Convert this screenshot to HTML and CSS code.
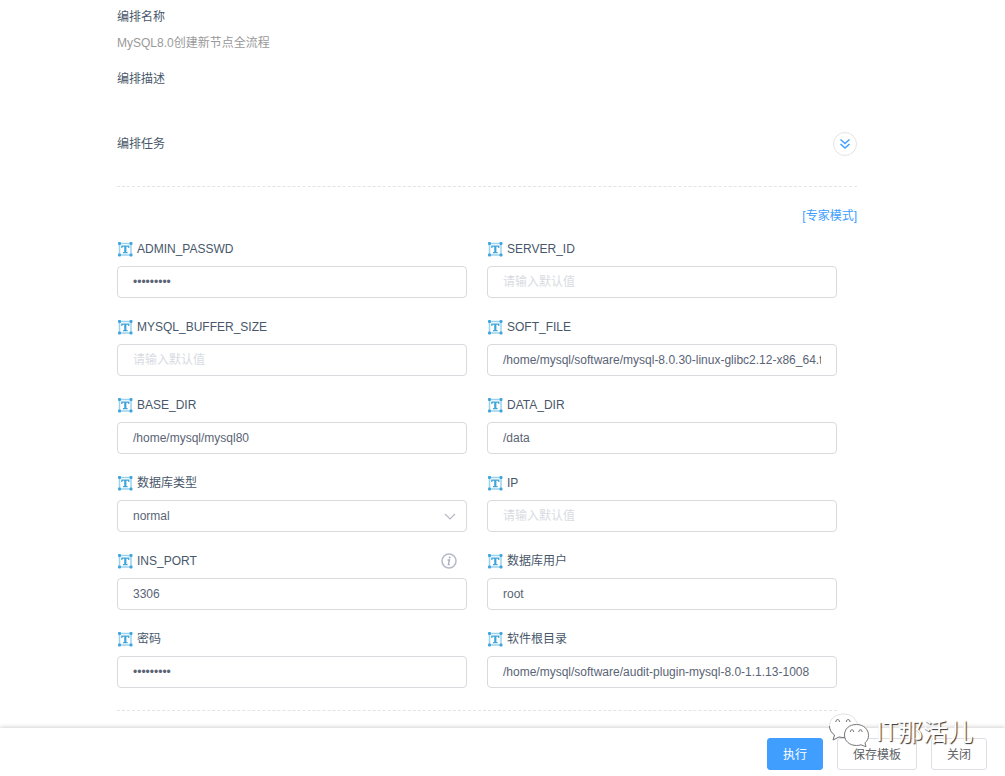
FILE: index.html
```
<!DOCTYPE html>
<html lang="zh-CN">
<head>
    <meta charset="UTF-8">
    <title>编排执行</title>
    <link rel="stylesheet" href="styles.css">
</head>
<body>
    <svg class="sprite" aria-hidden="true">
        <symbol id="icon-text" viewBox="0 0 16 16">
            <path d="M2.500 2.500h11.500v11.500h-11.500z" fill="none" stroke="#9dd2ee" stroke-width="1.500"/>
            <g fill="#3fa5dc">
                <rect x="1" y="1" width="3" height="3" rx="1"/>
                <rect x="12.500" y="1" width="3" height="3" rx="1"/>
                <rect x="1" y="12.500" width="3" height="3" rx="1"/>
                <rect x="12.500" y="12.500" width="3" height="3" rx="1"/>
                <path d="M4.200 4.500h8.200v2.500h-1l-.6-1.200H9.400v5.200h1.200v1.200H6v-1.200h1.200V5.800H5.800L5.200 7h-1z"/>
            </g>
        </symbol>
    </svg>

    <main class="content">
        <section class="info">
            <h2>编排名称</h2>
            <p>MySQL8.0创建新节点全流程</p>
            <h2>编排描述</h2>
        </section>

        <section class="task">
            <h2>编排任务</h2>
            <button type="button" class="expand" aria-label="展开">
                <svg width="12" height="12" viewBox="0 0 12 12" fill="none" stroke="#409eff" stroke-width="1.5"><path d="M1.500 1.500L6 5.500l4.500-4M1.500 6L6 10l4.500-4"/></svg>
            </button>
        </section>

        <div class="mode"><a href="#">[专家模式]</a></div>

        <form id="paramForm" class="params">
            <div class="field">
                <label for="adminPasswd"><svg class="icon"><use href="#icon-text"/></svg>ADMIN_PASSWD</label>
                <input type="password" id="adminPasswd" value="password1">
            </div>
            <div class="field">
                <label for="serverId"><svg class="icon"><use href="#icon-text"/></svg>SERVER_ID</label>
                <input type="text" id="serverId" placeholder="请输入默认值">
            </div>
            <div class="field">
                <label for="bufferSize"><svg class="icon"><use href="#icon-text"/></svg>MYSQL_BUFFER_SIZE</label>
                <input type="text" id="bufferSize" placeholder="请输入默认值">
            </div>
            <div class="field">
                <label for="softFile"><svg class="icon"><use href="#icon-text"/></svg>SOFT_FILE</label>
                <input type="text" id="softFile" value="/home/mysql/software/mysql-8.0.30-linux-glibc2.12-x86_64.tar.xz">
            </div>
            <div class="field">
                <label for="baseDir"><svg class="icon"><use href="#icon-text"/></svg>BASE_DIR</label>
                <input type="text" id="baseDir" value="/home/mysql/mysql80">
            </div>
            <div class="field">
                <label for="dataDir"><svg class="icon"><use href="#icon-text"/></svg>DATA_DIR</label>
                <input type="text" id="dataDir" value="/data">
            </div>
            <div class="field">
                <label for="dbType"><svg class="icon"><use href="#icon-text"/></svg>数据库类型</label>
                <div class="select-box">
                    <select id="dbType">
                        <option>normal</option>
                    </select>
                    <svg class="arrow" width="12" height="8" viewBox="0 0 12 8" fill="none" stroke="#b4b9c4" stroke-width="1.2"><path d="M1 1l5 5 5-5"/></svg>
                </div>
            </div>
            <div class="field">
                <label for="ip"><svg class="icon"><use href="#icon-text"/></svg>IP</label>
                <input type="text" id="ip" placeholder="请输入默认值">
            </div>
            <div class="field">
                <label for="insPort"><svg class="icon"><use href="#icon-text"/></svg>INS_PORT
                    <svg class="tip" viewBox="0 0 16 16"><circle cx="8" cy="8" r="7" fill="none" stroke="#b4b9c9" stroke-width="1.500"/><circle cx="8.700" cy="4.600" r="1" fill="#a9afc1"/><path d="M6.600 7h1.800l-1 4.600h1.400" fill="none" stroke="#a9afc1" stroke-width="1.400"/></svg>
                </label>
                <input type="text" id="insPort" value="3306">
            </div>
            <div class="field">
                <label for="dbUser"><svg class="icon"><use href="#icon-text"/></svg>数据库用户</label>
                <input type="text" id="dbUser" value="root">
            </div>
            <div class="field">
                <label for="dbPasswd"><svg class="icon"><use href="#icon-text"/></svg>密码</label>
                <input type="password" id="dbPasswd" value="password1">
            </div>
            <div class="field">
                <label for="softRoot"><svg class="icon"><use href="#icon-text"/></svg>软件根目录</label>
                <input type="text" id="softRoot" value="/home/mysql/software/audit-plugin-mysql-8.0-1.1.13-1008">
            </div>
        </form>
    </main>

    <footer class="actions">
        <button type="submit" form="paramForm" class="btn primary">执行</button>
        <button type="button" class="btn">保存模板</button>
        <button type="button" class="btn">关闭</button>
        <div class="watermark">
            <svg width="42" height="34" viewBox="0 0 42 34">
                <path d="M15.500 1C7.500 1 1.500 6 1.500 13c0 4 2 7 5 9L5 27l6-3c2 .5 4 .6 6 .5-2-7 4-13.500 12.500-13C28 5 22.500 1 15.500 1z" fill="#fff" stroke="#ccc" stroke-width=".6"/>
                <path d="M1.500 13c0 4 2 7 5 9L5 27l6-3c2 .5 4 .6 6 .5" fill="none" stroke="#777"/>
                <path d="M28.500 11.500C21 11.500 16.500 16 16.500 22s5 10.500 12 10.500c1.500 0 3-.2 4.500-.7l5 2-1-4c2.500-2 3.500-4.500 3.500-7.500 0-6-5-10.800-12-10.800z" fill="#fff" stroke="#777"/>
                <g fill="#fff" stroke="#666" stroke-width="1">
                    <path d="M8 9a1.800 1.800 0 1 1 3.400 0M18.500 9a1.800 1.800 0 1 1 3.400 0"/>
                    <path d="M22.500 19a1.600 1.600 0 1 1 3 0M31 19a1.600 1.600 0 1 1 3 0"/>
                </g>
            </svg>
            <span>IT那活儿</span>
        </div>
    </footer>
</body>
</html>
```
FILE: styles.css
```
* {
    box-sizing: border-box;
}
body {
    display: flex;
    flex-direction: column;
    height: 100vh;
    margin: 0;
    background: #fff;
    color: #48576a;
    font-family: "Liberation Sans", "Noto Sans CJK SC", sans-serif;
    font-size: 12px;
    line-height: 20px;
}
.sprite {
    position: absolute;
    width: 0;
    height: 0;
}
.content {
    flex: 1;
    min-height: 0;
    overflow: auto;
    padding: 7px 148px 0 117px;
}
h2, p {
    margin: 0;
    font-size: 12px;
    font-weight: normal;
}
.info p {
    margin: 6px 0 16px;
    color: #999;
}
.task {
    display: flex;
    justify-content: space-between;
    align-items: center;
    margin-top: 43px;
    padding-bottom: 30px;
    border-bottom: 1px dashed #e2e4e8;
}
.expand {
    display: flex;
    align-items: center;
    justify-content: center;
    width: 24px;
    height: 24px;
    padding: 0;
    border: 1px solid #e4e4e4;
    border-radius: 50%;
    background: #fff;
    cursor: pointer;
}
.mode {
    padding-top: 19px;
    text-align: right;
}
.mode a {
    color: #409eff;
    text-decoration: none;
}
.params {
    display: grid;
    grid-template-columns: 1fr 1fr;
    gap: 18px 20px;
    margin-right: 20px;
    padding: 12px 0 22px;
    border-bottom: 1px dashed #e2e4e8;
}
.field label {
    display: flex;
    align-items: center;
    height: 22px;
    margin-bottom: 6px;
}
.icon {
    width: 16px;
    height: 16px;
    margin-right: 4px;
}
.tip {
    width: 16px;
    height: 16px;
    margin: 0 10px 0 auto;
}
input, select {
    display: block;
    width: 100%;
    height: 32px;
    padding: 0 15px;
    border: 1px solid #d8dadd;
    border-radius: 4px;
    background: #fff;
    color: #5a6475;
    font-family: inherit;
    font-size: 12px;
    outline: none;
}
input::placeholder {
    color: #d8dbe2;
}
.select-box {
    position: relative;
}
select {
    appearance: none;
}
.arrow {
    position: absolute;
    top: 13px;
    right: 11px;
    pointer-events: none;
}
.actions {
    position: relative;
    display: flex;
    justify-content: flex-end;
    gap: 14px;
    padding: 10px 18px 6px;
    background: #fff;
    box-shadow: 0 -1px 4px rgba(0, 0, 0, .18);
}
.btn {
    height: 32px;
    padding: 0 15px 2px;
    border: 1px solid #dcdfe6;
    border-radius: 3px;
    background: #fff;
    color: #606266;
    font-family: inherit;
    font-size: 12px;
    cursor: pointer;
}
.btn.primary {
    border-color: #409eff;
    background: #409eff;
    color: #fff;
}
.watermark {
    position: absolute;
    top: -15px;
    right: 32px;
    display: flex;
    align-items: center;
    gap: 6px;
    color: #fff;
    font-family: "Noto Sans CJK SC", sans-serif;
    font-size: 25px;
    line-height: 34px;
    text-shadow: 1px 1px 1px #333;
    pointer-events: none;
}
```
